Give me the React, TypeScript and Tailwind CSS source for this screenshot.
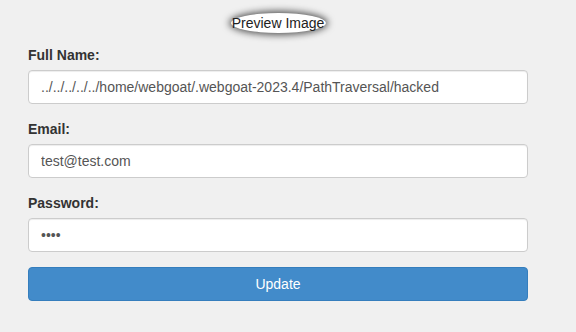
import React from 'react';

const inputCls =
  'block w-full h-[34px] px-[12px] py-[6px] text-[14px] leading-[20px] text-[#555] bg-white border border-[#ccc] rounded-[4px] shadow-[inset_0_1px_1px_rgba(0,0,0,0.075)] outline-none';

const Field: React.FC<{ label: string; type?: string; value: string }> = ({ label, type = 'text', value }) => (
  <div className="mb-[15px]">
    <label className="block mb-[5px] text-[14px] leading-[20px] font-bold text-[#333]">{label}</label>
    <input type={type} defaultValue={value} className={inputCls} />
  </div>
);

const App: React.FC = () => {
  return (
    <div className="min-h-[332px] w-[576px] bg-[#f0f0f0] font-['Liberation_Sans',Arial,sans-serif]">
      <div className="ml-[28px] w-[500px] pt-[13px]">
        <div className="flex justify-center mb-[12px]">
          <span className="inline-flex items-center justify-center h-[20px] w-[95px] rounded-[50%] bg-white text-[14px] leading-[20px] text-[#222] whitespace-nowrap shadow-[0_0_7px_2px_rgba(0,0,0,0.65)]">
            Preview Image
          </span>
        </div>
        <Field label="Full Name:" value="../../../../../home/webgoat/.webgoat-2023.4/PathTraversal/hacked" />
        <Field label="Email:" value="test@test.com" />
        <Field label="Password:" type="password" value="test" />
        <button className="block w-full h-[34px] text-[14px] leading-[20px] text-white bg-[#428bca] border border-[#357ebd] rounded-[4px]">
          Update
        </button>
      </div>
    </div>
  );
};

export default App;
